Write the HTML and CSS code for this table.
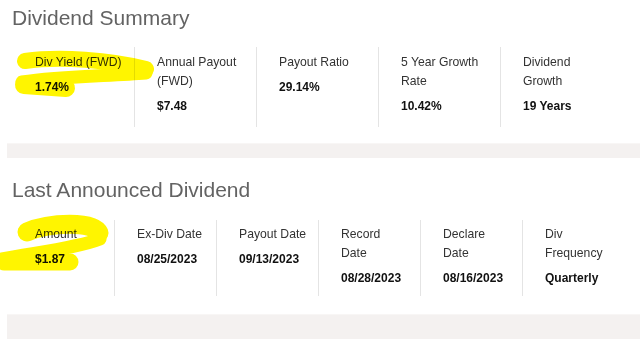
FILE: index.html
```html
<!DOCTYPE html>
<html lang="en">
<head>
<meta charset="utf-8">
<title>Dividend Summary</title>
<link rel="stylesheet" href="styles.css">
</head>
<body>
<main class="page">
  <section class="section section-summary">
    <h2 class="title">Dividend Summary</h2>
    <div class="row row-5">
      <div class="col"><div class="label">Div Yield (FWD)</div><div class="value">1.74%</div></div>
      <div class="col"><div class="label">Annual Payout (FWD)</div><div class="value">$7.48</div></div>
      <div class="col"><div class="label">Payout Ratio</div><div class="value">29.14%</div></div>
      <div class="col"><div class="label">5 Year Growth Rate</div><div class="value">10.42%</div></div>
      <div class="col"><div class="label">Dividend Growth</div><div class="value">19 Years</div></div>
    </div>
    <div class="band"></div>
  </section>
  <section class="section section-last">
    <h2 class="title">Last Announced Dividend</h2>
    <div class="row row-6">
      <div class="col"><div class="label">Amount</div><div class="value">$1.87</div></div>
      <div class="col"><div class="label">Ex-Div Date</div><div class="value">08/25/2023</div></div>
      <div class="col"><div class="label">Payout Date</div><div class="value">09/13/2023</div></div>
      <div class="col"><div class="label">Record Date</div><div class="value">08/28/2023</div></div>
      <div class="col"><div class="label">Declare Date</div><div class="value">08/16/2023</div></div>
      <div class="col"><div class="label">Div Frequency</div><div class="value">Quarterly</div></div>
    </div>
    <div class="band band-last"></div>
  </section>
  <svg class="marker" width="640" height="339" viewBox="0 0 640 339" aria-hidden="true">
    <g fill="none" stroke="#fff500" stroke-linecap="round" stroke-linejoin="round">
      <path d="M25 61 C60 56 110 60 146 69" stroke-width="16"/>
      <path d="M146 73 C110 76 60 76 22 82" stroke-width="13"/>
      <path d="M24 85 L66 88" stroke-width="18"/>
      <path d="M27 232 C50 222 94 221 99 233" stroke-width="19"/>
      <path d="M100 239 C80 247 40 252 2 259" stroke-width="13"/>
      <path d="M4 262 L70 262" stroke-width="17"/>
    </g>
  </svg>
</main>
</body>
</html>
```
FILE: styles.css
```css
* { box-sizing: border-box; }
html, body { margin: 0; padding: 0; background: #ffffff; }
body {
  font-family: "Liberation Sans", Arial, sans-serif;
  width: 640px;
  height: 339px;
  overflow: hidden;
}
.page { position: relative; padding-top: 5px; }
.title {
  margin: 0;
  padding-left: 12px;
  font-size: 21px;
  line-height: 26px;
  font-weight: normal;
  color: #636363;
}
.row {
  display: grid;
  margin-left: 12px;
  margin-top: 16px;
}
.row-5 { grid-template-columns: repeat(5, 122px); }
.row-6 { grid-template-columns: repeat(6, 102px); margin-top: 17px; }
.col {
  border-left: 1px solid #e4e4e4;
  padding: 6px 10px 11px 22px;
}
.col:first-child { border-left-color: transparent; }
.row-6 .col { padding: 5px 11.2px 8px 22px; }
.label {
  font-size: 12.2px;
  line-height: 19px;
  color: #333333;
}
.value {
  margin-top: 6px;
  font-size: 12px;
  line-height: 19px;
  font-weight: bold;
  color: #111111;
}
.band {
  margin-left: 7px;
  margin-top: 16px;
  height: 15px;
  background: #f4f1f0;
  border-top: 1px solid #f8f6f5;
}
.section-last { margin-top: 19px; }
.band-last { margin-top: 18px; height: 30px; }
.marker {
  position: absolute;
  left: 0;
  top: 0;
  pointer-events: none;
  mix-blend-mode: multiply;
}
```
